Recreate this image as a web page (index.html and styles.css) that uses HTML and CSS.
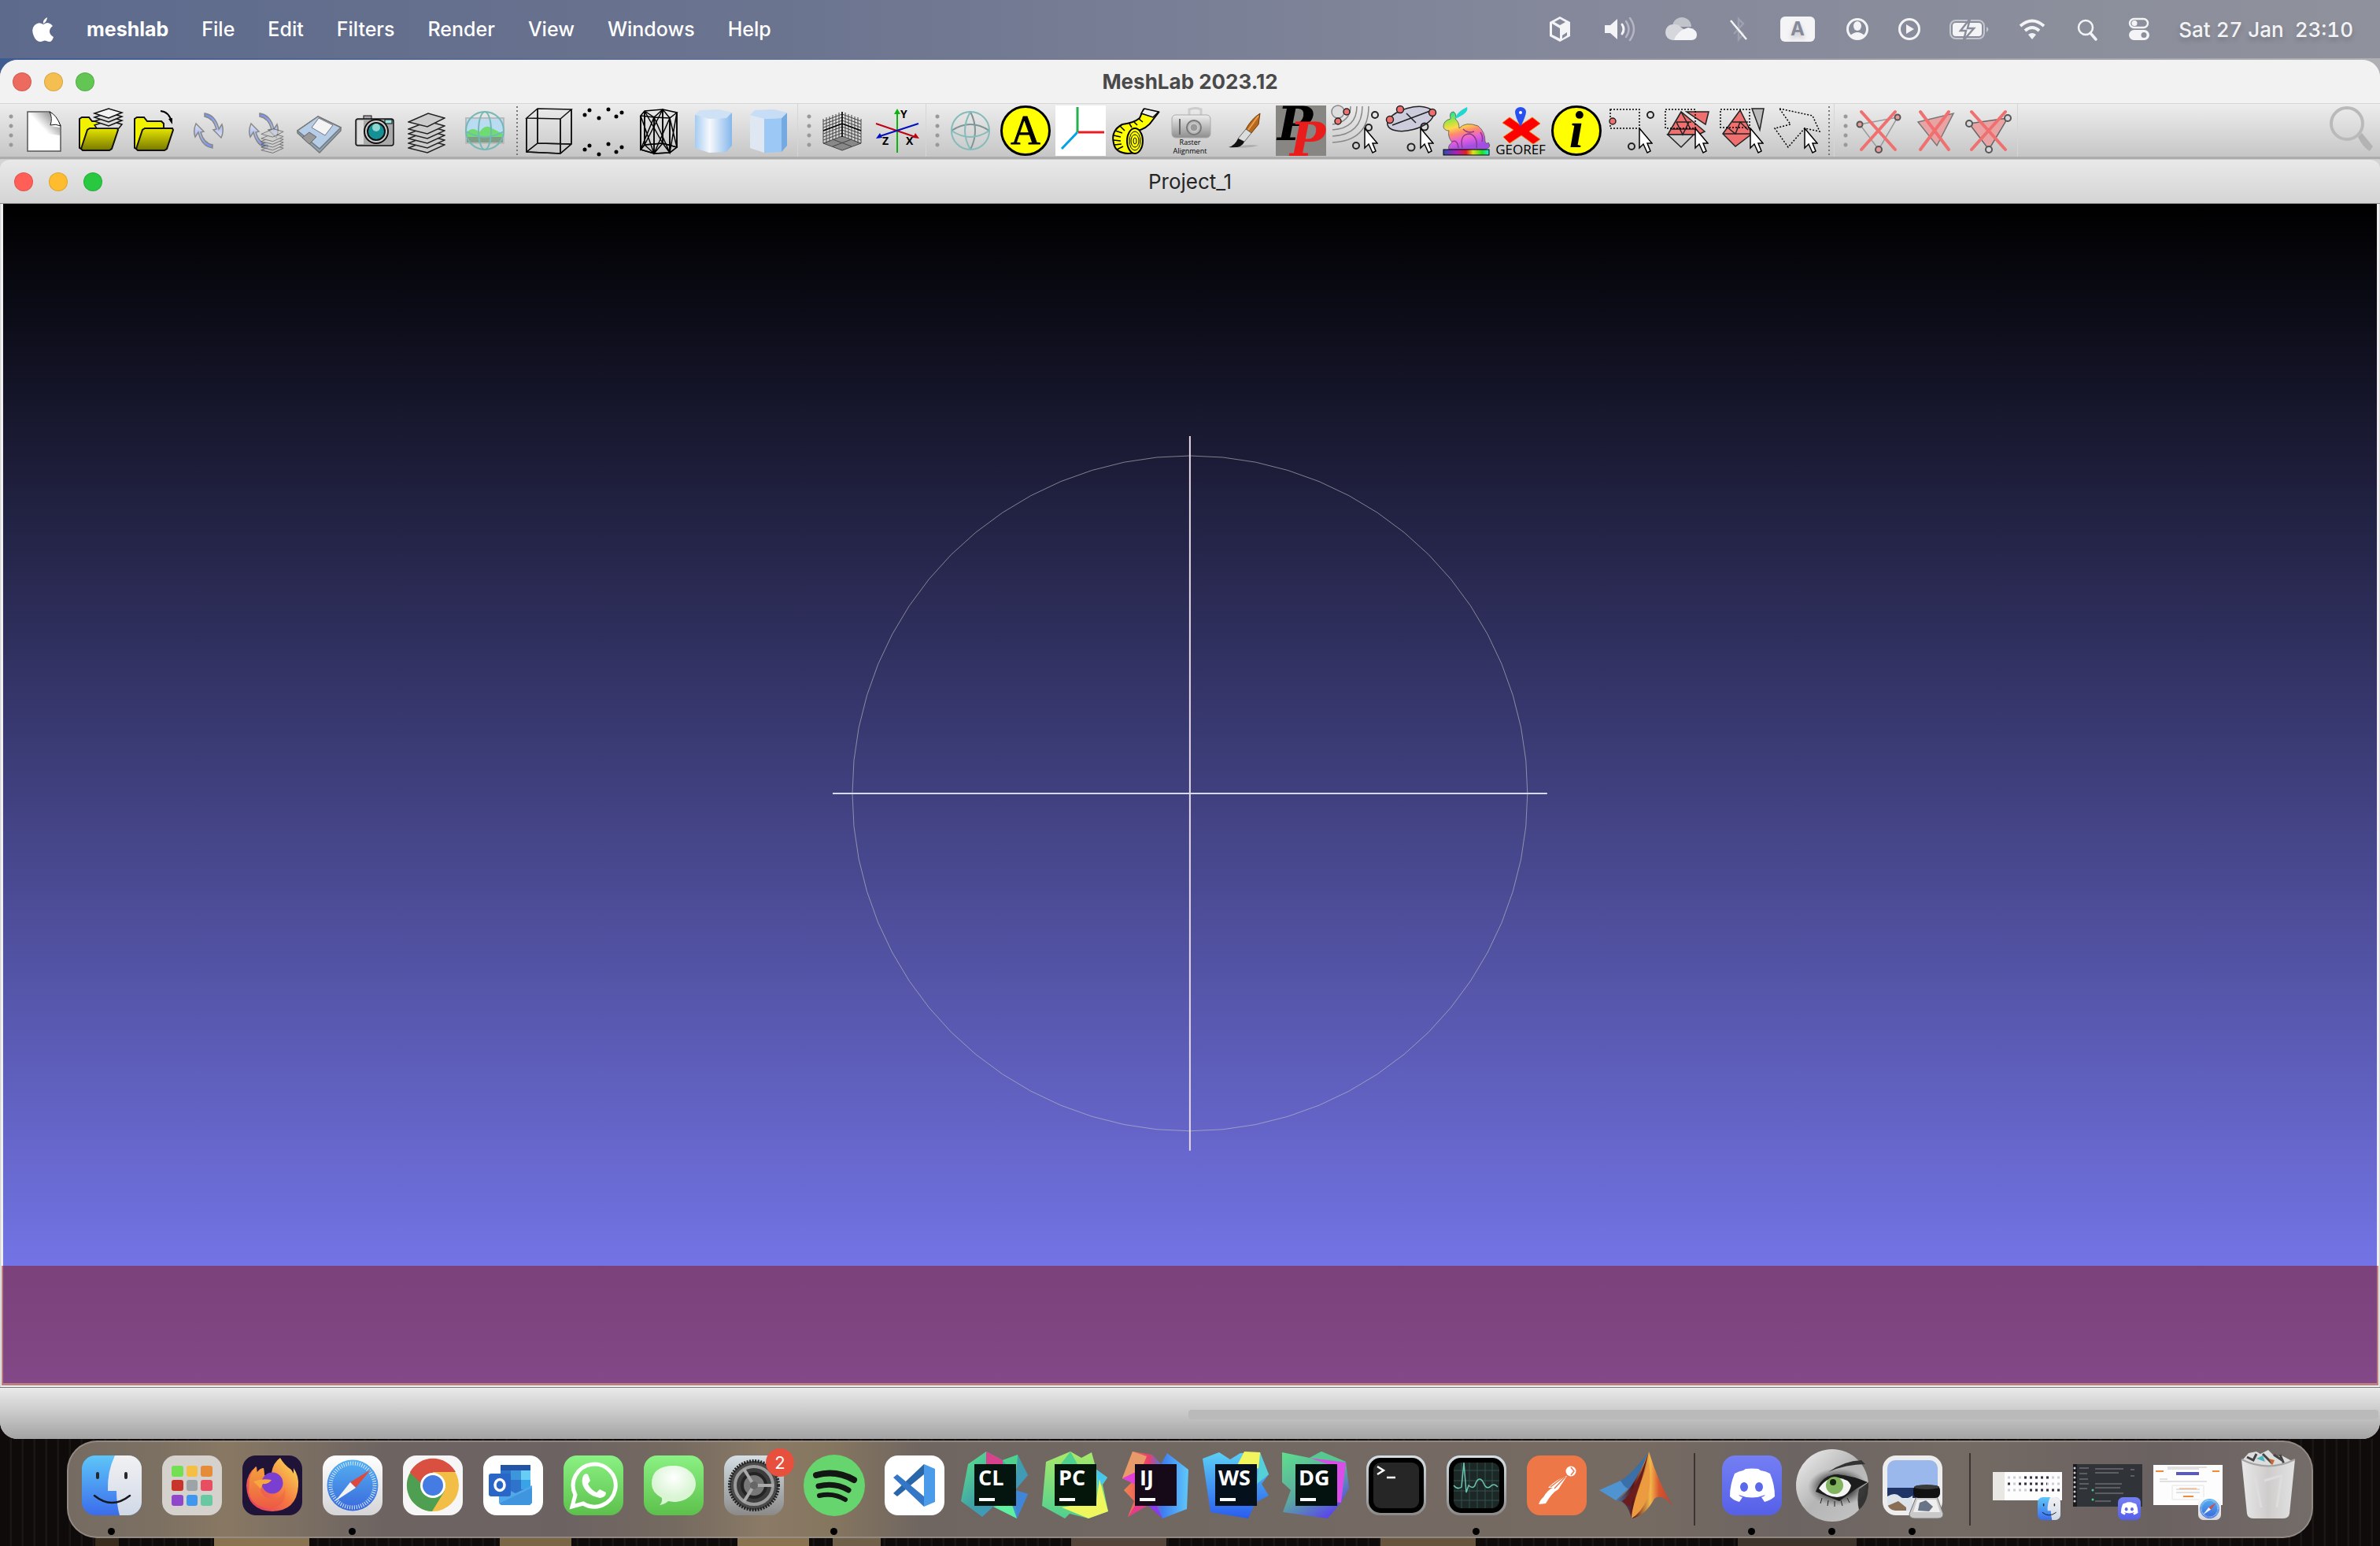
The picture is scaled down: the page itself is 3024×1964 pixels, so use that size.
FILE: index.html
```html
<!DOCTYPE html>
<html lang="en">
<head>
<meta charset="utf-8">
<title>MeshLab 2023.12</title>
<link rel="stylesheet" href="styles.css">
</head>
<body>
<svg class="defs" aria-hidden="true">
  <defs>
    <linearGradient id="gFinder" x2="0" y2="1"><stop stop-color="#5ec6f8"/><stop offset="1" stop-color="#3b6cec"/></linearGradient>
    <linearGradient id="gFace" x2="0" y2="1"><stop stop-color="#f2f1f3"/><stop offset="1" stop-color="#d0d9e6"/></linearGradient>
    <linearGradient id="gSafari" x2="0" y2="1"><stop stop-color="#54b0f1"/><stop offset="1" stop-color="#3a68dc"/></linearGradient>
    <linearGradient id="gPlate" x2="0" y2="1"><stop stop-color="#fff"/><stop offset="1" stop-color="#d5d5d7"/></linearGradient>
    <linearGradient id="gGreen" x2="0" y2="1"><stop stop-color="#8af283"/><stop offset="1" stop-color="#5dc04c"/></linearGradient>
    <linearGradient id="gDiscord" x2="0" y2="1"><stop stop-color="#747ff4"/><stop offset="1" stop-color="#5560e8"/></linearGradient>
    <linearGradient id="gSteel" x2="0" y2="1"><stop stop-color="#d5dfe5"/><stop offset="1" stop-color="#8b8a89"/></linearGradient>
    <linearGradient id="gFox" x1="1" x2="0" y2="1"><stop stop-color="#fbe755"/><stop offset=".5" stop-color="#f47a41"/><stop offset="1" stop-color="#e0306a"/></linearGradient>
    <linearGradient id="gFoxHead" x2="0" y2="1"><stop stop-color="#f3a23c"/><stop offset="1" stop-color="#ee5a45"/></linearGradient>
    <linearGradient id="gFolder" x2="0" y2="1"><stop stop-color="#e6e600"/><stop offset="1" stop-color="#777700"/></linearGradient>
    <linearGradient id="gDoc" x1="1" x2=".3" y2=".5"><stop stop-color="#666"/><stop offset="1" stop-color="#fff"/></linearGradient>
    <linearGradient id="gArrow" x2="0" y2="1"><stop stop-color="#6f8df0"/><stop offset="1" stop-color="#dfe3f2"/></linearGradient>
    <linearGradient id="gCyl" x2="1" y2="0"><stop stop-color="#a5ccf3"/><stop offset=".4" stop-color="#f7f9fc"/><stop offset="1" stop-color="#84b7ec"/></linearGradient>
    <linearGradient id="gMetal" x2="0" y2="1"><stop stop-color="#eee"/><stop offset="1" stop-color="#8d8d8d"/></linearGradient>
    <linearGradient id="gBunny" x2=".3" y2="1"><stop offset=".1" stop-color="#2ee68b"/><stop offset=".3" stop-color="#b5e53a"/><stop offset=".45" stop-color="#ffd84a"/><stop offset=".6" stop-color="#ff8c6a"/><stop offset=".8" stop-color="#e55fe0"/><stop offset="1" stop-color="#a04fe0"/></linearGradient>
    <linearGradient id="gRainbow" x2="1" y2="0"><stop stop-color="#2b4cb0"/><stop offset=".3" stop-color="#b020b0"/><stop offset=".5" stop-color="#e02020"/><stop offset=".65" stop-color="#e0e020"/><stop offset=".85" stop-color="#20e020"/><stop offset="1" stop-color="#20e8f0"/></linearGradient>
    <linearGradient id="gCL" x2="1" y2="1"><stop stop-color="#5fe887"/><stop offset=".5" stop-color="#3f9fa8"/><stop offset="1" stop-color="#3f8fe0"/></linearGradient>
    <linearGradient id="gPC" x2="0" y2="1"><stop stop-color="#a8ea6a"/><stop offset="1" stop-color="#4fcf90"/></linearGradient>
    <linearGradient id="gIJ" x2="1" y2="0"><stop stop-color="#f08a4a"/><stop offset=".4" stop-color="#ea3d6a"/><stop offset=".6" stop-color="#3d7cf0"/><stop offset="1" stop-color="#5fc8fa"/></linearGradient>
    <linearGradient id="gWS" x2="0" y2="1"><stop stop-color="#5cd0f4"/><stop offset="1" stop-color="#2a5cf0"/></linearGradient>
    <linearGradient id="gDG" x2=".6" y2="1"><stop stop-color="#5fe08c"/><stop offset=".6" stop-color="#5aa8a0"/><stop offset="1" stop-color="#5a4ae8"/></linearGradient>
    <linearGradient id="gMat" x2="1" y2="0"><stop stop-color="#3f7fb8"/><stop offset=".3" stop-color="#5a1418"/><stop offset=".6" stop-color="#f5b84a"/><stop offset=".75" stop-color="#d8562e"/><stop offset="1" stop-color="#b8402e"/></linearGradient>
    <linearGradient id="gSkin" x2="1" y2="1"><stop stop-color="#f2f2f2"/><stop offset=".5" stop-color="#b5b5b5"/><stop offset="1" stop-color="#c6c6c6"/></linearGradient>
    <radialGradient id="gShade"><stop offset=".4" stop-color="#1c1c1c"/><stop offset="1" stop-color="#555" stop-opacity="0"/></radialGradient>
    <radialGradient id="gBubble" cy=".3"><stop stop-color="#fff"/><stop offset="1" stop-color="#d9f5d4"/></radialGradient>
    <linearGradient id="gBin" x2="1" y2="0"><stop stop-color="#e8e8e8"/><stop offset=".5" stop-color="#cfcdcc"/><stop offset="1" stop-color="#e2e2e2"/></linearGradient>
    <symbol id="finder" viewBox="0 0 76 76">
      <rect width="76" height="76" rx="17" fill="url(#gFinder)"/>
      <path d="M42 0h17a17 17 0 0 1 17 17v42a17 17 0 0 1-17 17H48q-4-14-4-31H33q-1-24 9-45z" fill="url(#gFace)"/>
      <path d="M20 23v5M56 23v5" stroke="#23282e" stroke-width="4" stroke-linecap="round"/>
      <path d="M16 51q22 18 45 0" fill="none" stroke="#15191e" stroke-width="2.500" stroke-linecap="round"/>
    </symbol>
    <symbol id="safari" viewBox="0 0 76 76">
      <rect width="76" height="76" rx="17" fill="url(#gPlate)"/>
      <circle cx="38" cy="38" r="32.500" fill="url(#gSafari)"/>
      <circle cx="38" cy="38" r="28" fill="none" stroke="#d8ecfb" stroke-width="5" stroke-dasharray="1 1.930"/>
      <path d="M61 18 42 41l-7-7z" fill="#dd4a3d"/><path d="M16 58l19-24 7 7z" fill="#f3f3f3"/>
    </symbol>
    <symbol id="discord" viewBox="0 0 76 76">
      <rect width="76" height="76" rx="17" fill="url(#gDiscord)"/>
      <path d="M30 17q8-1 16 0l3 2q7 1 12 4 6 14 6 29-5 5-13 7l-4-6q4-1 5-3-17 7-34 0 1 2 5 3l-4 6q-8-2-12-7 0-15 6-29 5-3 11-4z" fill="#fff"/>
      <ellipse cx="28" cy="40" rx="5" ry="6" fill="#5c68ec"/><ellipse cx="47" cy="40" rx="5" ry="6" fill="#5c68ec"/>
    </symbol>
    <symbol id="cursor" viewBox="0 0 18 34"><path d="M1 1v25l5-5 5 11 4-2-4-10h6z" fill="#fff" stroke="#000" stroke-width="1.500"/></symbol>
    <symbol id="layers" viewBox="0 0 48 52">
      <g fill="#ccc" stroke="#222" stroke-width="1.500"><path d="M1 45 26 35l21 6-22 10z"/><path d="M1 39 26 29l21 6-22 10z"/><path d="M1 33 26 23l21 6-22 10z"/><path d="M1 27 26 17l21 6-22 10z"/><path d="M1 21 26 11l21 6-22 10z"/><path d="M1 12 26 1l21 6-22 11z"/></g>
    </symbol>
    <symbol id="arrows" viewBox="0 0 44 48">
      <g fill="url(#gArrow)" stroke="#888" stroke-width="1.500"><path d="M15 2q14 2 18 20l4-6q3 8-1 17l-10-10 4-1Q26 8 15 6z"/><path d="M15 2q14 2 18 20l4-6q3 8-1 17l-10-10 4-1Q26 8 15 6z" transform="rotate(180 20 24)"/></g>
    </symbol>
    <path id="quad" d="M0-429 42-427 83.700-420.800 124.500-410.500 164.200-396.300 202.200-378.300 238.300-356.700 272.200-331.600 303.400-303.400 331.600-272.200 356.700-238.300 378.300-202.200 396.300-164.200 410.500-124.500 420.800-83.700 427-42 429 0"/>
  </defs>
</svg>

<header class="menubar">
  <nav class="menus" aria-label="Application menus">
    <button class="menu apple" aria-label="Apple"><svg width="27" height="32" viewBox="0 0 27 32"><path d="M19 1q0 5-5 8-1-5 5-8zM14 10q3-2 6-2 4 1 6 4-4 3-4 7t5 7q-2 6-5 6-2 0-4-1t-4 0-4 1Q5 32 2 25q-4-9 1-14 5-5 11-1z" fill="#fff"/></svg></button>
    <button class="menu app-name">meshlab</button>
    <button class="menu">File</button>
    <button class="menu">Edit</button>
    <button class="menu">Filters</button>
    <button class="menu">Render</button>
    <button class="menu">View</button>
    <button class="menu">Windows</button>
    <button class="menu">Help</button>
  </nav>
  <div class="status-items">
    <svg width="36" height="34"><path d="M15 1l13 7v18L15 33 2 26V8z" fill="#f4f4f6"/><path d="M5 10l10 6v13L5 24zM8 8l7-4 7 4-7 4z" fill="#85899b"/><path d="M18 25l6-4v4l-6 4z" fill="#85899b"/></svg>
    <svg width="41" height="34"><path d="M0 12h7l9-8v26l-9-8H0z" fill="#f4f4f6"/><path d="M22 11q4 6 0 12" fill="none" stroke="#f4f4f6" stroke-width="3" stroke-linecap="round"/><path d="M27 7q7 10 0 20M32 3q10 14 0 28" fill="none" stroke="#b4b6c1" stroke-width="2.500" stroke-linecap="round"/></svg>
    <svg width="46" height="34"><path d="M9 14a12 12 0 0 1 24 0z" fill="#c2c4cc"/><path d="M9 11a11 11 0 0 1 10 3l8 6-15 11H9a9 10 0 0 1 0-20z" fill="#d6d7dc"/><path d="M11 31q4-12 18-16 11 2 11 9 0 7-7 7z" fill="#f4f4f6"/></svg>
    <svg width="28" height="34"><path d="M4 11l13 12-6 7V4l6 6L5 23" fill="none" stroke="#9da0ae" stroke-width="2.500"/><path d="M1 6l20 24" stroke="#f4f4f6" stroke-width="2.500"/></svg>
    <svg width="48" height="34"><rect y="1" width="44" height="32" rx="6" fill="#f4f4f6"/><text x="22" y="25" class="input-letter">A</text></svg>
    <svg width="30" height="34"><circle cx="14" cy="17" r="12.500" fill="none" stroke="#f4f4f6" stroke-width="3"/><ellipse cx="14" cy="13" rx="5" ry="6" fill="#f4f4f6"/><path d="M4 26q10-10 20 0-10 8-20 0z" fill="#f4f4f6"/></svg>
    <svg width="29" height="34"><circle cx="14" cy="17" r="12.500" fill="none" stroke="#f4f4f6" stroke-width="3"/><path d="M10 11l10 6-10 6z" fill="#f4f4f6"/></svg>
    <svg width="52" height="34"><rect x="1" y="6" width="43" height="23" rx="7" fill="none" stroke="#c4c6cd" stroke-width="2"/><rect x="4" y="9" width="37" height="17" rx="4" fill="#f4f4f6"/><path d="M47 14q5 3 0 7z" fill="#c4c6cd"/><path d="M26 4 14 19h7l-3 12 13-15h-8z" fill="#f4f4f6" stroke="#898c9a" stroke-width="2.500"/></svg>
    <svg width="38" height="34"><g fill="none" stroke="#f4f4f6" stroke-width="4"><path d="M2 13q15-13 30 0M8 19q9-8 18 0"/></g><path d="M12 24q5-4 10 0l-5 6z" fill="#f4f4f6"/></svg>
    <svg width="29" height="34"><circle cx="11" cy="15" r="9" fill="none" stroke="#f4f4f6" stroke-width="2.500"/><path d="M17 22l7 8" stroke="#f4f4f6" stroke-width="3.500" stroke-linecap="round"/></svg>
    <svg width="28" height="34"><rect x="2" y="4" width="23" height="11" rx="5.500" fill="none" stroke="#f4f4f6" stroke-width="2.500"/><circle cx="8" cy="9.500" r="3.500" fill="#f4f4f6"/><rect x="1" y="18" width="26" height="13" rx="6.500" fill="#f4f4f6"/><circle cx="20" cy="24.500" r="3.500" fill="#8b8e9b"/></svg>
    <time class="clock">Sat 27 Jan&nbsp; 23:10</time>
  </div>
</header>

<main class="window">
  <div class="titlebar">
    <div class="lights muted"><button aria-label="Close"></button><button aria-label="Minimise"></button><button aria-label="Zoom"></button></div>
    <h1>MeshLab 2023.12</h1>
  </div>
  <div class="toolbar" role="toolbar">
    <div class="tools">
      <span class="grip"></span>
      <button class="tool" aria-label="New project"><svg viewBox="0 0 64 64"><path d="M11 8h28q8 6 14 18v32H11z" fill="#fff" stroke="#555" stroke-width="1.500"/><path d="M14 9h25q3 6 1 17l12 2v10L24 34z" fill="url(#gDoc)"/><path d="M39 8q4 8 1 17 7-2 13 1Q48 12 39 8z" fill="#fff" stroke="#111"/></svg></button>
      <button class="tool" aria-label="Open project"><svg viewBox="0 0 64 64"><path d="M7 54V17l3-2h9l4 5h19v12L13 57z" fill="#f2f200" stroke="#111" stroke-width="2"/><path d="M9 55l8-24 3-2h35l1 2-8 24-3 2H11z" fill="url(#gFolder)" stroke="#111" stroke-width="2"/><g fill="#ddd" stroke="#111" stroke-width="1.500"><path d="M26 25l18-6 17 5-4 5H29z"/><path d="M26 20l18-6 17 5-17 7z"/><path d="M26 15l18-6 17 5-17 7z"/><path d="M26 10l18-6 17 5-17 7z" fill="#f4f4f4"/></g></svg></button>
      <button class="tool" aria-label="Import mesh"><svg viewBox="0 0 64 64"><path d="M7 54V17l3-2h9l4 5h18l3 3v9L13 57z" fill="#f2f200" stroke="#111" stroke-width="2"/><path d="M9 55l8-24 3-2h35l1 2-8 24-3 2H11z" fill="url(#gFolder)" stroke="#111" stroke-width="2"/><path d="M40 7q11 1 14 14" fill="none" stroke="#000" stroke-width="2"/><path d="M55 24l-5-7 5-1z"/></svg></button>
      <button class="tool" aria-label="Reload"><svg viewBox="0 0 64 64"><use href="#arrows" x="11" y="8" width="44" height="48"/></svg></button>
      <button class="tool" aria-label="Reload all"><svg viewBox="0 0 64 64"><use href="#arrows" x="11" y="8" width="44" height="48"/><use href="#layers" x="26" y="29" width="32" height="32" opacity=".55"/></svg></button>
      <button class="tool" aria-label="Export mesh"><svg viewBox="0 0 64 64"><path d="M30 14 59 28v4L32 60 4 35v-3z" fill="#8ba6ba" stroke="#777" stroke-width="1.500"/><path d="M30 14 59 28 32 55 4 32z" fill="#b5cde6" stroke="#777" stroke-width="1.500"/><path d="M31 16l18 9-10 13-17-10z" fill="#f4f4f4" stroke="#778"/><path d="M19 34l9 6-9 9-9-8z" fill="#999" stroke="#666"/></svg></button>
      <button class="tool" aria-label="Snapshot"><svg viewBox="0 0 64 64"><rect x="18" y="13" width="10" height="6" fill="#aaa" stroke="#111"/><rect x="8" y="17" width="48" height="34" rx="3" fill="#aaa" stroke="#111" stroke-width="1.500"/><path d="M10 19h8v30h-8z" fill="#ddd"/><rect x="45" y="18" width="9" height="5" fill="#9de6e6" stroke="#111"/><circle cx="34" cy="33" r="15" fill="#ccc" stroke="#111" stroke-width="2"/><circle cx="34" cy="33" r="11" fill="#159094" stroke="#111" stroke-width="2"/><circle cx="34" cy="28" r="5" fill="#8fd6d0"/></svg></button>
      <button class="tool" aria-label="Layer dialog"><svg viewBox="0 0 64 64"><use href="#layers" x="4" y="9" width="48" height="52"/></svg></button>
      <button class="tool" aria-label="Raster mode"><svg viewBox="0 0 64 64"><rect x="8" y="16" width="48" height="32" fill="#b9dcf3" stroke="#bbb" stroke-width="2"/><path d="M9 34q8-8 16 0 8-12 18-4l12 6v11H9z" fill="#6fdc70"/><path d="M9 40h46v7H9z" fill="#7f9f84"/><g fill="none" stroke="#74b8b8" stroke-width="2"><circle cx="32" cy="32" r="24"/><ellipse cx="32" cy="32" rx="8" ry="24"/><path d="M8 33q24 14 48 0"/></g></svg></button>
      <span class="divider"></span>
      <button class="tool" aria-label="Bounding box"><svg viewBox="0 0 64 64"><path d="M4 16 18 4l43 1-14 12zv43l43 2 14-12V5M47 17v44M18 4v44L4 59M18 48l43 1" fill="none" stroke="#111" stroke-width="1.500"/><path d="M4 16v43l43 2 14-12V5" fill="none" stroke="#111" stroke-width="1.500"/><path d="M47 17v44M18 4v44L4 59M18 48l43 1" fill="none" stroke="#111" stroke-width="1.500"/></svg></button>
      <button class="tool" aria-label="Points"><svg viewBox="0 0 64 64"><path d="M8 12h0M14 6h0M38 5h0M55 9h0M48 14h0M26 16h0M8 56h0M14 51h0M38 49h0M55 53h0M48 59h0M26 62h0" stroke="#000" stroke-width="5" stroke-linecap="round"/></svg></button>
      <button class="tool" aria-label="Wireframe"><svg viewBox="0 0 64 64"><path d="M9 13 14 7 37 5 55 9 46 16 26 15zV56L14 50 37 48 55 53 46 60 26 61 9 56M14 7v43M37 5v43M55 9v44M46 16v44M26 15v46" fill="none" stroke="#000" stroke-width="1.500"/><path d="M9 13v43l17 5 20-1 9-7V9M14 7v43M37 5v43M46 16v44M26 15v46M14 50l23-2 18 5M14 50l-5 6" fill="none" stroke="#000" stroke-width="1.500"/><path d="M9 13l17 48 20-45 9 37M9 56l17-41 20 45 9-51M14 7l23 41M37 5 14 50M14 7l12 8 11-10 9 11M14 50l12 11 11-13 9 12" fill="none" stroke="#000" stroke-width="1.500"/></svg></button>
      <button class="tool" aria-label="Smooth shading"><svg viewBox="0 0 64 64"><path d="M8 12v42l18 6 22-1 7-8V9z" fill="url(#gCyl)"/><path d="M8 12l6-6 24-1 17 4-7 7-22 1z" fill="#cfe1f5"/></svg></button>
      <button class="tool" aria-label="Flat shading"><svg viewBox="0 0 64 64"><path d="M8 12v42l18 6V17z" fill="#dfe8f2"/><path d="M26 17v43l22-1V16z" fill="#9bc8f4"/><path d="M48 16v43l7-8V9z" fill="#74a9e2"/><path d="M8 12l6-6 24-1 17 4-7 7-22 1z" fill="#c6ddf5"/></svg></button>
    </div>
    <div class="tools">
      <span class="grip"></span>
      <button class="tool" aria-label="Background grid"><svg viewBox="0 0 64 64"><path d="M8 48l24-9 24 9-24 9z" fill="#888"/><path d="M32 8v32M8 17v31M56 17v31M12 15v33M16 14v32M20 12v31M24 11v31M28 9v31M36 9v31M40 11v31M44 12v31M48 14v32M52 15v33M8 20l24-9 24 9M8 24l24-9 24 9M8 28l24-9 24 9M8 32l24-9 24 9M8 36l24-9 24 9M8 40l24-9 24 9M8 44l24-9 24 9M8 48l24-9 24 9-24 9zM20 43l24 9M44 43l-24 9" fill="none" stroke="#444" stroke-width="1"/><path d="M8 32l24-9 24 9M32 8v32" fill="none" stroke="#000" stroke-width="1.500"/></svg></button>
      <button class="tool" aria-label="World axis"><svg viewBox="0 0 64 64"><path d="M32 60V8" stroke="#0db40d" stroke-width="2"/><path d="M32 4l4 7h-8z" fill="#0db40d"/><path d="M5 23l50 17" stroke="#c00010" stroke-width="2"/><path d="M60 42l-8-1 3-6z" fill="#c00010"/><path d="M59 23 10 39" stroke="#0010c0" stroke-width="2"/><path d="M5 42l8-1-3-6z" fill="#0010c0"/><text x="36" y="16" class="axis-label">Y</text><text x="13" y="50" class="axis-label">Z</text><text x="43" y="50" class="axis-label">X</text></svg></button>
    </div>
    <div class="tools">
      <span class="grip"></span>
      <button class="tool" aria-label="Trackball"><svg viewBox="0 0 64 64"><g fill="none" stroke-width="2"><path d="M8 32q24-16 48 0M32 8q12 24 0 48" stroke="#7f9595"/><circle cx="32" cy="32" r="24" stroke="#84bcbc"/><path d="M8 32q24 16 48 0M32 8q-14 24 0 48" stroke="#84bcbc"/></g></svg></button>
      <button class="tool" aria-label="Annotations"><svg viewBox="0 0 64 64"><circle cx="32" cy="32" r="30.500" fill="#ff0" stroke="#000" stroke-width="3"/><text x="32" y="49" class="glyph-a">A</text></svg></button>
      <button class="tool" aria-label="Axis"><svg viewBox="0 0 64 64"><path d="M0 0h64v64H0z" fill="#fff"/><g stroke-width="3" fill="none"><path d="M28 2v32" stroke="#22b14c"/><path d="M29 34h33" stroke="#ed1c24"/><path d="M28 34 8 55" stroke="#00a2e8"/></g></svg></button>
      <button class="tool" aria-label="Measure"><svg viewBox="0 0 64 64"><path d="M42 5 37 16Q30 22 15 24 0 32 4 48q2 12 18 13l12-1q8-20-4-27 16-2 24-15l7-9z" fill="#ff0" stroke="#000" stroke-width="2"/><path d="M43 4l18 4-7 7-15-5z" fill="#eee" stroke="#000" stroke-width="1.500"/><path d="M12 26l6 6M6 32l9 3M4 38l9 2M4 44l9 1M5 50l9-1M8 56l8-4M24 23l3 5M30 21l4 4M36 17l5 4" stroke="#000" stroke-width="1.500"/><g fill="#ff0" stroke="#000"><ellipse cx="31" cy="45" rx="10" ry="16" stroke-width="2"/><ellipse cx="31" cy="45" rx="7" ry="12"/><ellipse cx="31" cy="45" rx="5" ry="8"/><ellipse cx="31" cy="45" rx="2" ry="4"/></g></svg></button>
      <button class="tool" aria-label="Raster alignment"><svg viewBox="0 0 64 64"><path d="M30 13V5q8-3 15 0v8" fill="none" stroke="#ccc" stroke-width="3"/><rect x="8" y="12" width="49" height="29" rx="5" fill="url(#gMetal)" stroke="#aaa"/><path d="M18 17v20" stroke="#666" stroke-width="2"/><circle cx="36" cy="28" r="9" fill="#bbb" stroke="#777" stroke-width="2"/><circle cx="36" cy="28" r="5" fill="#999" stroke="#ddd"/><text x="31" y="50" class="tiny">Raster</text><text x="31" y="61" class="tiny">Alignment</text></svg></button>
      <button class="tool" aria-label="Z-painting"><svg viewBox="0 0 64 64"><path d="M18 53q16-5 30-2-14 4-30 2z" fill="#999" opacity=".6"/><path d="M50 10l-2 14-9 11-7-5q7-13 18-20z" fill="#b8681c" stroke="#6b3a0c"/><path d="M48 13 35 31" stroke="#e8a050" stroke-width="2"/><path d="M32 30l7 5-9 11-8-4z" fill="#ddd" stroke="#666"/><path d="M22 42l8 4q-3 9-20 7 8-2 12-11z" fill="#111"/></svg></button>
      <button class="tool" aria-label="PickPoints"><svg viewBox="0 0 64 64"><path d="M0 0h64v64H0z" fill="#888683"/><text x="2" y="44" class="glyph-p">P</text><text x="18" y="64" class="glyph-p red">P</text></svg></button>
      <button class="tool" aria-label="Point selection"><svg viewBox="0 0 64 64"><g fill="none" stroke="#888" stroke-width="1.500"><circle cx="9" cy="8" r="8" fill="#ddd"/><path d="M25 1q0 20-23 23M33 1q0 28-31 30M40 1q0 36-38 38M48 1q0 44-46 46"/></g><g stroke="#222" stroke-width="1.500"><circle cx="20" cy="8" r="4" fill="#f07070"/><circle cx="9" cy="20" r="4" fill="#f07070"/><g fill="none" stroke-width="2"><circle cx="56" cy="12" r="4"/><circle cx="48" cy="28" r="4"/><circle cx="32" cy="51" r="4"/></g></g><use href="#cursor" x="42" y="28" width="18" height="34"/></svg></button>
      <button class="tool" aria-label="Plane selection"><svg viewBox="0 0 64 64"><g stroke="#222" stroke-width="1.500" fill="none"><ellipse cx="31" cy="17" rx="30" ry="14" fill="#ccd" transform="rotate(-15 31 17)"/><path d="M8 25 56 7M26 10l12 12"/><g fill="#f07070"><circle cx="5" cy="18" r="4.500"/><circle cx="18" cy="5" r="4.500"/><circle cx="59" cy="9" r="4.500"/></g><g stroke-width="2"><circle cx="49" cy="27" r="4.500"/><circle cx="32" cy="53" r="4.500"/></g></g><use href="#cursor" x="43" y="28" width="18" height="34"/></svg></button>
      <button class="tool" aria-label="Quality mapper"><svg viewBox="0 0 64 64"><path d="M3 27q0-8 9-10-2-9 4-9 4 3 2 9 5 4 5 12 8-9 24-3 9 7 9 20 2 4 4 1 5 6-4 9H10q-2-5 4-9-6-8-4-15-6 0-7-5z" fill="url(#gBunny)" stroke="#555" stroke-width=".8"/><path d="M18 15Q22 7 33 2q3 7-15 15z" fill="#20d8d0"/><path d="M27 54q-4-18 10-18 10 4 8 18M14 46q7-3 8 8M28 30q6 6 14 3M50 34q4 6 2 12" fill="none" stroke="#8a3a8a" stroke-width="1.500"/><rect x="3" y="56" width="58" height="7" fill="url(#gRainbow)" stroke="#000"/></svg></button>
      <button class="tool" aria-label="Georeference"><svg viewBox="0 0 64 64"><path d="M8 22l9-7 14 10 15-10 10 8-14 10 14 10-9 6-15-11-15 10-8-8 13-9z" fill="#f00" stroke="#f47a10"/><path d="M24 8a7 6 0 0 1 14 0q0 5-7 19Q24 14 24 8z" fill="#2850f0"/><circle cx="31" cy="9" r="2" fill="#fff"/><text x="31" y="62" class="georef">GEOREF</text></svg></button>
      <button class="tool" aria-label="Get info"><svg viewBox="0 0 64 64"><circle cx="32" cy="32" r="30.500" fill="#ff0" stroke="#000" stroke-width="3"/><text x="32" y="53" class="glyph-i">i</text></svg></button>
      <button class="tool" aria-label="Select vertices"><svg viewBox="0 0 64 64"><path d="M5 5h37v24H5z" fill="none" stroke="#000" stroke-width="1.500" stroke-dasharray="2 2"/><circle cx="8" cy="20" r="4" fill="#f07070" stroke="#222" stroke-width="1.500"/><g fill="none" stroke="#222" stroke-width="2"><circle cx="56" cy="12" r="4"/><circle cx="32" cy="52" r="4"/></g><use href="#cursor" x="41" y="28" width="18" height="34"/></svg></button>
      <button class="tool" aria-label="Select faces"><svg viewBox="0 0 64 64"><g fill="#f07070" stroke="#222" stroke-width="1.500"><path d="M25 8 8 37h39L55 33z"/><path d="M32 8h28l-4 16z"/><path d="M8 37h33L25 53z" fill="#ccc"/><path d="M19 21h19M13 30h30M19 21l8 16 8-16M25 8l12 22"/></g><path d="M5 5h38v24H5z" fill="none" stroke="#000" stroke-width="1.500" stroke-dasharray="2 2"/><use href="#cursor" x="42" y="28" width="18" height="34"/></svg></button>
      <button class="tool" aria-label="Select connected components"><svg viewBox="0 0 64 64"><g fill="#f07070" stroke="#222" stroke-width="1.500"><path d="M30 6 8 36l16 16 21-16z"/><path d="M20 21h20M8 36h37M14 28l10 8 6-15 10 10"/><path d="M45 4h15l-5 27z" fill="#bbb"/></g><path d="M5 5h37v23H5z" fill="none" stroke="#000" stroke-width="1.500" stroke-dasharray="2 2"/><use href="#cursor" x="42" y="28" width="18" height="34"/></svg></button>
      <button class="tool" aria-label="Polyline selection"><svg viewBox="0 0 64 64"><path d="M10 4l42 9 9 20-19-4-21 24L4 29l20-5z" fill="none" stroke="#000" stroke-width="1.500" stroke-dasharray="2 2"/><use href="#cursor" x="41" y="28" width="18" height="34"/></svg></button>
      <span class="divider"></span>
    </div>
    <div class="tools">
      <span class="grip"></span>
      <button class="tool" aria-label="Delete vertices"><svg viewBox="0 0 64 64"><path d="M8 24l48-9-24 41z" fill="none" stroke="#999" stroke-width="1.500"/><path d="M10 8l43 48M53 8 10 56" stroke="#f07070" stroke-width="4" stroke-linecap="round"/><g fill="#e89a9a" stroke="#555" stroke-width="2"><circle cx="8" cy="24" r="3.500"/><circle cx="56" cy="15" r="3.500"/><circle cx="32" cy="56" r="4"/></g></svg></button>
      <button class="tool" aria-label="Delete faces"><svg viewBox="0 0 64 64"><path d="M12 21l45-11-21 41z" fill="#e8a4a4" stroke="#777" stroke-width="1.500"/><path d="M15 8l36 48M51 8 15 56" stroke="#f07070" stroke-width="4" stroke-linecap="round"/></svg></button>
      <button class="tool" aria-label="Delete faces and vertices"><svg viewBox="0 0 64 64"><path d="M7 23l49-7-24 40z" fill="#e8a4a4" stroke="#666" stroke-width="1.500"/><path d="M10 8l43 48M53 8 10 56" stroke="#f07070" stroke-width="4" stroke-linecap="round"/><g fill="#d8d8d8" stroke="#555" stroke-width="2"><circle cx="7" cy="23" r="4"/><circle cx="56" cy="16" r="4"/><circle cx="32" cy="56" r="4"/></g></svg></button>
    </div>
    <button class="tool search" aria-label="Search filters"><svg viewBox="0 0 64 64"><circle cx="26" cy="24" r="20" fill="none" stroke="#bababa" stroke-width="4"/><path d="M40 41l5-5 14 17-4 6q-9-5-15-18z" fill="#b3b3b3"/></svg></button>
  </div>

  <section class="project">
    <div class="titlebar sub">
      <div class="lights"><button aria-label="Close project"></button><button aria-label="Minimise project"></button><button aria-label="Maximise project"></button></div>
      <h2>Project_1</h2>
    </div>
    <div class="viewport">
      <svg class="trackball" viewBox="-454 -454 908 908">
        <g fill="none" stroke="#c4c4c4" stroke-opacity=".6"><use href="#quad"/><use href="#quad" transform="scale(-1 1)"/><use href="#quad" transform="scale(1 -1)"/><use href="#quad" transform="scale(-1 -1)"/></g>
        <path d="M0-454V454" stroke="#ead9e4" stroke-width="2"/><path d="M-454 0H454" stroke="#d3dcf0" stroke-width="2"/>
      </svg>
      <div class="info-pane"></div>
    </div>
  </section>
  <footer class="statusbar"><div class="progress"></div></footer>
</main>

<footer class="desktop">
  <nav class="dock" aria-label="Dock">
    <button class="app running" aria-label="Finder"><svg viewBox="0 0 102 96"><use href="#finder" x="13" y="10" width="76" height="76"/></svg></button>
    <button class="app" aria-label="Launchpad"><svg viewBox="0 0 102 96"><rect x="13" y="10" width="76" height="76" rx="17" fill="#d5d2ce"/><rect x="25" y="23" width="15" height="14" rx="3" fill="#72e052"/><rect x="44" y="23" width="14" height="14" rx="3" fill="#f4bf42"/><rect x="62" y="23" width="15" height="14" rx="3" fill="#e58c39"/><rect x="25" y="41" width="15" height="14" rx="3" fill="#c8352a"/><rect x="44" y="41" width="14" height="14" rx="3" fill="#9da4a8"/><rect x="62" y="41" width="15" height="14" rx="3" fill="#e84e62"/><rect x="25" y="60" width="15" height="14" rx="3" fill="#9147cc"/><rect x="44" y="60" width="14" height="14" rx="3" fill="#3f98f0"/><rect x="62" y="60" width="15" height="14" rx="3" fill="#67c9a2"/></svg></button>
    <button class="app" aria-label="Firefox"><svg viewBox="0 0 102 96"><rect x="13" y="10" width="76" height="76" rx="17" fill="#1f1338"/><path d="M50 32q2-13 11-19 5 9 14 15l3 5V26q7 10 6 23-2 31-33 32-32-1-33-33 1-16 13-24l1 8q4-6 8-6l1 10z" fill="url(#gFox)"/><path d="M22 40q2-9 8-16l1 8q4-6 9-6l1 9 9 5-4 5q-8 2-10 9 3 10 14 11 14 0 17-14 3 23-17 26-24 0-29-20z" fill="url(#gFoxHead)"/><circle cx="51" cy="45" r="13.500" fill="#7a3fd0"/><path d="M27 43q10-4 23-2-4 6-11 5l-3 6z" fill="#f9a63e"/></svg></button>
    <button class="app running" aria-label="Safari"><svg viewBox="0 0 102 96"><use href="#safari" x="13" y="10" width="76" height="76"/></svg></button>
    <button class="app" aria-label="Google Chrome"><svg viewBox="0 0 102 96"><rect x="13" y="10" width="76" height="76" rx="17" fill="#f6f6f6"/><circle cx="51" cy="48" r="33" fill="#f3be45"/><path d="M22 31a33 33 0 0 1 58 0H51L34 57z" fill="#d95040"/><path d="M22 32a33 33 0 0 0 28 49l16-26-24 5z" fill="#4f9f52"/><path d="M22 31l15 26 14-9V31z" fill="#d95040"/><path d="M22 32l15 26 8-4z" fill="#4f9f52"/><circle cx="51" cy="48" r="16" fill="#fff"/><circle cx="51" cy="48" r="13" fill="#447ce4"/></svg></button>
    <button class="app" aria-label="Outlook"><svg viewBox="0 0 102 96"><rect x="13" y="10" width="76" height="76" rx="17" fill="#fff"/><rect x="35" y="22" width="38" height="38" rx="3" fill="#2f74cb"/><path d="M35 22h38v7H35z" fill="#2255a5"/><path d="M48 29h13v12H48z" fill="#3d95dc"/><path d="M61 29h12v12H61z" fill="#68cdf5"/><path d="M61 41h12v12H61z" fill="#3aa2e6"/><path d="M33 48l21 10 21-10v22l-3 3H36l-3-3z" fill="#52a7e8"/><path d="M33 71l42-20v19l-3 3H36z" fill="#3f95de"/><rect x="20" y="33" width="28" height="29" rx="3" fill="#2a66c8"/><ellipse cx="34" cy="47.500" rx="6" ry="7" fill="none" stroke="#fff" stroke-width="3.500"/></svg></button>
    <button class="app" aria-label="WhatsApp"><svg viewBox="0 0 102 96"><rect x="13" y="10" width="76" height="76" rx="17" fill="url(#gGreen)"/><path d="M24 75l4-15a27 27 0 1 1 10 11z" fill="none" stroke="#fff" stroke-width="5"/><path d="M38 36q2-4 6-2l3 8-3 4q4 8 11 11l4-4 8 4q0 6-8 7-18-4-22-18-1-6 1-10z" fill="#fff"/></svg></button>
    <button class="app" aria-label="Messages"><svg viewBox="0 0 102 96"><rect x="13" y="10" width="76" height="76" rx="17" fill="url(#gGreen)"/><path d="M51 23c16 0 28 10 28 23S67 69 51 69l-7-1q-4 4-11 5 4-4 3-9-13-7-13-18 0-23 28-23z" fill="url(#gBubble)"/></svg></button>
    <button class="app" aria-label="System Settings"><svg viewBox="0 0 102 96"><rect x="13" y="10" width="76" height="76" rx="17" fill="url(#gSteel)"/><circle cx="51" cy="48" r="31" fill="#4a4a4a"/><circle cx="51" cy="48" r="31" fill="none" stroke="#222" stroke-width="4" stroke-dasharray="2 1.500"/><circle cx="51" cy="48" r="24" fill="#3c3c3c" stroke="#9b9b9b" stroke-width="4"/><circle cx="51" cy="48" r="15" fill="#777" stroke="#242424" stroke-width="4"/><path d="M51 48h25M51 48 38 27M51 48 38 69" stroke="#aaa" stroke-width="4"/><circle cx="51" cy="48" r="5" fill="#666"/></svg><span class="badge">2</span></button>
    <button class="app running" aria-label="Spotify"><svg viewBox="0 0 102 96"><circle cx="51" cy="48" r="39" fill="#67d56d"/><g fill="none" stroke="#131713" stroke-linecap="round"><path d="M28 35q25-7 48 6" stroke-width="8"/><path d="M31 49q21-5 38 5" stroke-width="7"/><path d="M32 61q18-4 33 5" stroke-width="6"/></g></svg></button>
    <button class="app" aria-label="Visual Studio Code"><svg viewBox="0 0 102 96"><rect x="13" y="10" width="76" height="76" rx="17" fill="#fff"/><path d="M24 58l5 4L63 34V21z" fill="#2a66a8"/><path d="M24 38l5-4 34 28v13z" fill="#3377c6"/><path d="M63 21l14 6v42l-14 6z" fill="#4a9bea"/><path d="M63 35v26L47 48z" fill="#fff"/></svg></button>
    <button class="app" aria-label="CLion"><svg viewBox="0 0 102 96"><path d="M17 21 40 5l21 11 19-7 13 26-16 19 16 5-14 31-30-15-14 13L8 68z" fill="url(#gCL)"/><path d="M40 5l21 11v10H40z" fill="#d8428c"/><path d="M61 16l19-7-2 28z" fill="#4fd08c"/><path d="M49 75l30 15-7-20z" fill="#5ff0a0"/><path d="M77 54l16 5-14 31z" fill="#3f86d8"/><path d="M25 21h53v53H25z" fill="#04150f"/><text x="30" y="48" class="jb">CL</text><path d="M31 64h20v4H31z" fill="#fff"/></svg></button>
    <button class="app" aria-label="PyCharm"><svg viewBox="0 0 102 96"><path d="M14 18 45 5l14 8 13-7 6 22 14 10-6 9 7 34-25 9-24-6-6 6L9 74z" fill="url(#gPC)"/><path d="M78 28l14 10-12 16z" fill="#45c8f0"/><path d="M82 40l11 41-25 9-34-14 44-8z" fill="#eef75e"/><path d="M45 5 26 30h33z" fill="#4fcf90"/><path d="M25 21h53v53H25z" fill="#04150a"/><text x="30" y="48" class="jb">PC</text><path d="M31 64h20v4H31z" fill="#fff"/></svg></button>
    <button class="app" aria-label="IntelliJ IDEA"><svg viewBox="0 0 102 96"><path d="M22 5l25 4 11 12 8-14 27 21-2 50-31 12-14-20-30 18 8-20-13-14 10-10L9 39z" fill="url(#gIJ)"/><path d="M22 5l18 6-14 34L9 39z" fill="#e89a6a"/><path d="M9 39l17-8v16z" fill="#e040d8"/><path d="M16 88l32-18-18-4z" fill="#e83a8c"/><path d="M40 72l10-4 10 22z" fill="#8a3af0"/><path d="M25 21h53v53H25z" fill="#170a18"/><text x="31" y="48" class="jb">IJ</text><path d="M31 64h20v4H31z" fill="#fff"/></svg></button>
    <button class="app" aria-label="WebStorm"><svg viewBox="0 0 102 96"><path d="M9 14 30 6l14 9 13-8 25-1 11 28-9 12 9 15-17 9-9 20-48-8z" fill="url(#gWS)"/><path d="M62 5l20 1 4 20-36 2z" fill="#f2f55e"/><path d="M82 7l11 27-15 12z" fill="#56d0d8"/><path d="M25 21h53v53H25z" fill="#04101c"/><text x="29" y="48" class="jb">WS</text><path d="M31 64h20v4H31z" fill="#fff"/></svg></button>
    <button class="app" aria-label="DataGrip"><svg viewBox="0 0 102 96"><path d="M8 6l35 7 15-8 31 13 4 33-10 19-17 20-57-8 10-28-11-10z" fill="url(#gDG)"/><path d="M43 13l46 6-6 51-8-1V24z" fill="#dc4ce8"/><path d="M43 13l15-8 31 13z" fill="#58c890"/><path d="M25 21h53v53H25z" fill="#04120f"/><text x="29" y="48" class="jb">DG</text><path d="M31 64h20v4H31z" fill="#fff"/></svg></button>
    <button class="app" aria-label="Terminal"><svg viewBox="0 0 102 96"><rect x="13" y="10" width="76" height="76" rx="17" fill="url(#gSteel)"/><rect x="16" y="13" width="70" height="70" rx="15" fill="#000"/><rect x="22" y="19" width="58" height="58" rx="9" fill="#262626"/><path d="M27 24l8 5-8 5M39 38h11" fill="none" stroke="#fff" stroke-width="2.500"/></svg></button>
    <button class="app running" aria-label="Activity Monitor"><svg viewBox="0 0 102 96"><rect x="13" y="10" width="76" height="76" rx="17" fill="url(#gSteel)"/><rect x="16" y="13" width="70" height="70" rx="15" fill="#000"/><rect x="22" y="19" width="58" height="58" rx="9" fill="#1b2826"/><path d="M22 29h58M22 42h58M22 55h58M22 67h58M32 19v58M42 19v58M52 19v58M62 19v58M71 19v58" stroke="#35504b" stroke-width="1"/><path d="M22 48q5 6 10 2l3-31 3 38 3-9q7 6 9-3 5-10 10 0 3 8 8 5 5-6 10 0" fill="none" stroke="#6cc4b2" stroke-width="1.500"/></svg></button>
    <button class="app" aria-label="Postman"><svg viewBox="0 0 102 96"><rect x="13" y="10" width="76" height="76" rx="17" fill="#ee7748"/><circle cx="69" cy="30" r="6.500" fill="#fff"/><path d="M64 36 53 53q-8 4-16 18l-9 1q2-6 6-9 6-10 12-12l-6 0q12-12 24-15z" fill="#fff"/><path d="M43 50l17-13M48 52l14-15M69 25l4 5-4 5" stroke="#ee7748" stroke-width="1.500" fill="none"/></svg></button>
    <button class="app" aria-label="MATLAB"><svg viewBox="0 0 102 96"><path d="M3 54 30 42l12 8-18 17z" fill="#4f94d0"/><path d="M30 42q14-8 36-37L46 52q-8 4-16-10z" fill="#3b6fa8"/><path d="M24 67q20-8 42-62 12 40 31 70-14-18-24-10-12 22-29 25-5-22-20-23z" fill="url(#gMat)"/><path d="M66 5q-12 54-26 70l-8-7Q48 58 66 5z" fill="#6b1c1c"/><path d="M44 90q0-18 22-72 4 28-2 47-8 18-20 25z" fill="#ec9b40"/></svg></button>
    <span class="rule"></span>
    <button class="app running" aria-label="Discord"><svg viewBox="0 0 102 96"><use href="#discord" x="13" y="10" width="76" height="76"/></svg></button>
    <button class="app running" aria-label="MeshLab"><svg viewBox="0 0 102 96"><circle cx="51" cy="48" r="46" fill="url(#gSkin)"/><path d="M97 44q1 24-12 35-3-12 0-26z" fill="#333"/><ellipse cx="58" cy="50" rx="38" ry="24" fill="url(#gShade)"/><path d="M30 56q8-22 28-22 20 2 38 10l-14 8-22 16z" fill="#1c1c1c"/><path d="M34 52q9-14 23-14 15 2 18 10-3 14-18 15-14-1-23-11z" fill="#f4f4f4"/><circle cx="54" cy="48" r="11" fill="#82b45f"/><circle cx="52" cy="44" r="4" fill="#16240f"/><path d="M46 31q20-14 42-15l5 5q-24 0-47 10z" fill="#333"/><path d="M38 64l-2 7M46 67l-1 7M54 68v7M62 67l2 7M70 64l3 6" stroke="#222"/></svg></button>
    <button class="app running" aria-label="Preview"><svg viewBox="0 0 102 96"><rect x="13" y="10" width="76" height="76" rx="17" fill="#ededed"/><clipPath id="cPrev"><rect x="19" y="16" width="64" height="64" rx="10"/></clipPath><g clip-path="url(#cPrev)"><path d="M19 16h64v35H19z" fill="#9ab8ec"/><path d="M19 51h64v13H19z" fill="#1f3568"/><path d="M19 62q10-6 16 0t16-1v20H19z" fill="#dde3ea"/><path d="M19 74l14-6 10 8v5H19z" fill="#8a6d55"/></g><path d="M56 62h26l8 22q0 6-7 6H54q-7 0-7-6z" fill="#c9c9c9" stroke="#777"/><path d="M57 66h24l5 16H52z" fill="#eee"/><path d="M60 70l8-3 9 8-5 6-14-1z" fill="#697587"/><rect x="52" y="48" width="34" height="16" rx="6" fill="#111"/><ellipse cx="69" cy="50" rx="16" ry="3" fill="#3a3a3a"/></svg></button>
    <span class="rule"></span>
    <button class="app" aria-label="Minimised Finder window"><svg viewBox="0 0 102 96"><rect x="7" y="31" width="88" height="36" fill="#fdfdfd"/><path d="M7 31h15v36H7z" fill="#e9e7e4"/><path d="M26 38h68M26 46h68M26 54h68" stroke="#ccd" stroke-width="3" stroke-dasharray="3 4"/><path d="M47 38h32M26 46h5M40 46h36M54 54h40" stroke="#334" stroke-width="3" stroke-dasharray="3 4"/><use href="#finder" x="64" y="63" width="29" height="29"/></svg></button>
    <button class="app" aria-label="Minimised Discord window"><svg viewBox="0 0 102 96"><path d="M7 21h88v54H7z" fill="#303338"/><path d="M7 21h5v54H7z" fill="#1a1b1e"/><path d="M9 26h0M9 32h0M9 38h0M9 44h0M9 50h0M9 56h0M9 62h0M9 68h0" stroke="#ccc" stroke-width="3" stroke-linecap="round"/><path d="M15 26h12M15 33h10M15 40h11M15 46h12M15 52h10M35 27h36M35 32h30M35 46h34M35 51h32M35 58h36M35 68h20M80 28h5M80 36h5" stroke="#5c5e64" stroke-width="2"/><path d="M32 54h0M32 66h0" stroke="#4c8" stroke-width="3" stroke-linecap="round"/><use href="#discord" x="64" y="63" width="29" height="29"/></svg></button>
    <button class="app" aria-label="Minimised Safari window"><svg viewBox="0 0 102 96"><path d="M7 22h88v51H7z" fill="#fdfdfd"/><path d="M36 31h29v4H36z" fill="#5a5ab8"/><path d="M10 30h10M82 30h9M45 62h13" stroke="#ef8b3a" stroke-width="2"/><path d="M25 25h50M25 27h40M15 40h10M15 43h60M36 53h30M36 57h30" stroke="#c4c4c8"/><path d="M31 48h40v18H31z" fill="none" stroke="#e5e5e5"/><path d="M40 52h22" stroke="#e8a060"/><use href="#safari" x="64" y="63" width="29" height="29"/></svg></button>
    <button class="app" aria-label="Bin"><svg viewBox="0 0 102 96"><path d="M18 16l8-9 10-2 5 3 10-5 9 9 8-2 13 7-4 8H26z" fill="#ddd"/><path d="M24 12l8 4 4-8M44 8l12 12M58 9l12 8M66 9l6 14" stroke="#444" stroke-width="3" fill="none"/><path d="M36 14l8-4 3 8z" fill="#4ab4c0"/><path d="M52 14l7 2-3 7z" fill="#c86a30"/><path d="M17 15q34 14 68 0l-7 69q-1 6-9 6H33q-8 0-9-6z" fill="url(#gBin)"/><path d="M17 15q34 17 68 0" fill="none" stroke="#a4a4a4" stroke-width="2"/><path d="M34 36l8 40M68 34l-6 42M46 42l20-6" stroke="#ddd" stroke-width="3"/></svg></button>
  </nav>
</footer>
</body>
</html>
```
FILE: styles.css
```css
* { box-sizing: border-box; }
html, body { height: 100%; margin: 0; }
body {
  display: flex;
  flex-direction: column;
  font-family: Inter, "Liberation Sans", sans-serif;
  background:
    linear-gradient(90deg, #3f5c92, #7c7f92 50%, #b0b0b4) top / 100% 100px no-repeat,
    #0f0b0b;
}
button { margin: 0; padding: 0; border: 0; background: none; font: inherit; color: inherit; }
svg { display: block; }
.defs { width: 0; height: 0; position: absolute; }

.menubar {
  display: flex;
  justify-content: space-between;
  align-items: center;
  height: 74px;
  padding: 0 34px 0 41px;
  background: linear-gradient(90deg, #5d6a8c, #6b748f 33%, #83879a 63%, #8f929c);
  color: #fff;
  font-size: 25px;
  font-weight: 500;
  text-shadow: 0 4px 6px rgba(0, 0, 0, .2);
}
.menus { display: flex; align-items: center; gap: 42px; }
.app-name { font-weight: 700; }
.status-items { display: flex; align-items: center; gap: 36px; }
.clock { color: #f4f4f6; font-size: 26px; font-variant-numeric: tabular-nums; }
.input-letter { font: 700 24px Inter, sans-serif; fill: #85899a; text-anchor: middle; }

.window {
  flex: 1;
  display: flex;
  flex-direction: column;
  margin-top: 2px;
  overflow: hidden;
  border-radius: 22px;
  background: #d4d4d4;
}
.titlebar {
  display: grid;
  grid-template-columns: 1fr auto 1fr;
  align-items: center;
  height: 56px;
  padding: 0 16px;
  background: #f2f2f2;
  border-bottom: 1px solid #d6d6d6;
}
.titlebar h1, .titlebar h2 { margin: 0; font-size: 26px; line-height: 32px; }
.titlebar h1 { color: #4a4a4a; font-weight: 700; }
.titlebar h2 { color: #262626; font-weight: 400; }
.lights { display: flex; gap: 16px; }
.lights button { width: 24px; height: 24px; border-radius: 50%; background: #ff5f57; border: 1px solid rgba(0, 0, 0, .12); }
.lights button:nth-child(2) { background: #febc2e; }
.lights button:nth-child(3) { background: #28c840; }
.muted button { background: #ed6a5f; }
.muted button:nth-child(2) { background: #f4be50; }
.muted button:nth-child(3) { background: #62c554; }

.toolbar {
  display: flex;
  height: 70px;
  background: linear-gradient(#ededed, #c6c6c6);
  border-bottom: 3px solid #acacac;
}
.tools { display: flex; align-items: center; gap: 6px; padding-right: 4px; border-right: 1px solid #d6d6d6; }
.grip {
  width: 24px;
  height: 48px;
  margin-right: -6px;
  background: radial-gradient(circle, #999 2px, transparent 3px) 8px 0 / 12px 12px repeat-y;
}
.tool { width: 64px; height: 64px; }
.tool svg { width: 64px; height: 64px; overflow: visible; }
.divider { width: 5px; height: 62px; background: repeating-linear-gradient(#777 0 2px, transparent 2px 5px) 2px 0 / 2px 100% no-repeat; }
.search { margin: 1px 4px 0 auto; }
.axis-label { font: 700 14px "Open Sans", sans-serif; }
.glyph-a { font: 52px "Liberation Serif", serif; text-anchor: middle; stroke: #000; }
.glyph-p { font: italic 700 60px "DejaVu Serif", serif; }
.red { fill: #ea1d1d; }
.glyph-i { font: italic 700 66px "Liberation Serif", serif; text-anchor: middle; }
.tiny { font: 9px "Open Sans", sans-serif; text-anchor: middle; }
.georef { font: 17px "Open Sans", sans-serif; text-anchor: middle; }

.project { flex: 1; display: flex; flex-direction: column; min-height: 0; border-top: 1px solid #ccc; }
.sub {
  padding: 0 18px;
  border-radius: 12px 12px 0 0;
  background: linear-gradient(#e9e9e9, #d4d4d4);
  border-bottom: 1px solid #8a8a8a;
}
.sub .lights { gap: 20px; }
.viewport {
  flex: 1;
  min-height: 0;
  display: flex;
  flex-direction: column;
  align-items: center;
  justify-content: center;
  position: relative;
  margin: 0 1px;
  border: solid #f0f0f0;
  border-width: 0 3px 5px;
  background: linear-gradient(#000, #8080ff) padding-box;
}
.trackball { height: 60.6%; }
.info-pane { position: absolute; inset: auto -2px -3px; height: 152px; background: rgba(131, 15, 15, .5); }

.statusbar {
  display: flex;
  justify-content: flex-end;
  align-items: center;
  height: 66px;
  border-top: 1px solid #777;
  background: linear-gradient(#eaeaea, #c8c8c8 50%, #a3a3a3);
}
.progress { width: 50%; height: 12px; margin: 2px 2px 0 0; border-radius: 4px; background: #bababa; }

.desktop {
  display: flex;
  justify-content: center;
  height: 136px;
  padding: 2px 0 10px;
  background:
    linear-gradient(90deg, transparent 4%, #3a2c1c 4% 5%, transparent 5% 9%, #8a7350 9% 13%, transparent 13% 21%, #7a6545 21% 24%, transparent 24% 31%, #8a7350 31% 34%, transparent 34% 35%, #70604a 35% 37%, transparent 37% 45%, #54443a 45% 49%, transparent 49% 58%, #66543c 58% 62%, transparent 62% 73%, #3e342c 73% 78%, transparent 78%) bottom / 100% 10px no-repeat,
    repeating-linear-gradient(90deg, transparent 0 12px, rgba(60, 54, 48, .25) 13px 15px),
    #0f0b0b;
}
.dock {
  display: flex;
  align-items: center;
  padding: 0 4px;
  border: 2px solid rgba(158, 150, 142, .7);
  border-radius: 38px;
  background: linear-gradient(90deg, #756b62, #7c7062 4%, #887863 7%, #6d6462 14%, #6c6262 22%, #756a60 27%, #8a7a66 31%, #85765f 34%, #706661 38%, #736963 55%, #766b62 70%, #6c6462 77%, #746b64 84%, #6a6161 93%, #746c68);
}
.app { position: relative; width: 102px; height: 120px; padding-bottom: 9px; }
.app svg { width: 102px; height: 96px; margin-top: -2px; }
.running::after {
  content: "";
  position: absolute;
  left: 46px;
  bottom: 2px;
  width: 9px;
  height: 9px;
  border-radius: 50%;
  background: #000;
}
.rule { width: 44px; height: 92px; background: linear-gradient(#3c3432, #3c3432) center / 2px 100% no-repeat; }
.badge {
  position: absolute;
  top: 8px;
  right: 0;
  width: 36px;
  height: 36px;
  border-radius: 50%;
  background: #e8503e;
  color: #fff;
  font-size: 22px;
  line-height: 36px;
}
.jb { font: 700 27px "Open Sans", sans-serif; fill: #fff; }
```
